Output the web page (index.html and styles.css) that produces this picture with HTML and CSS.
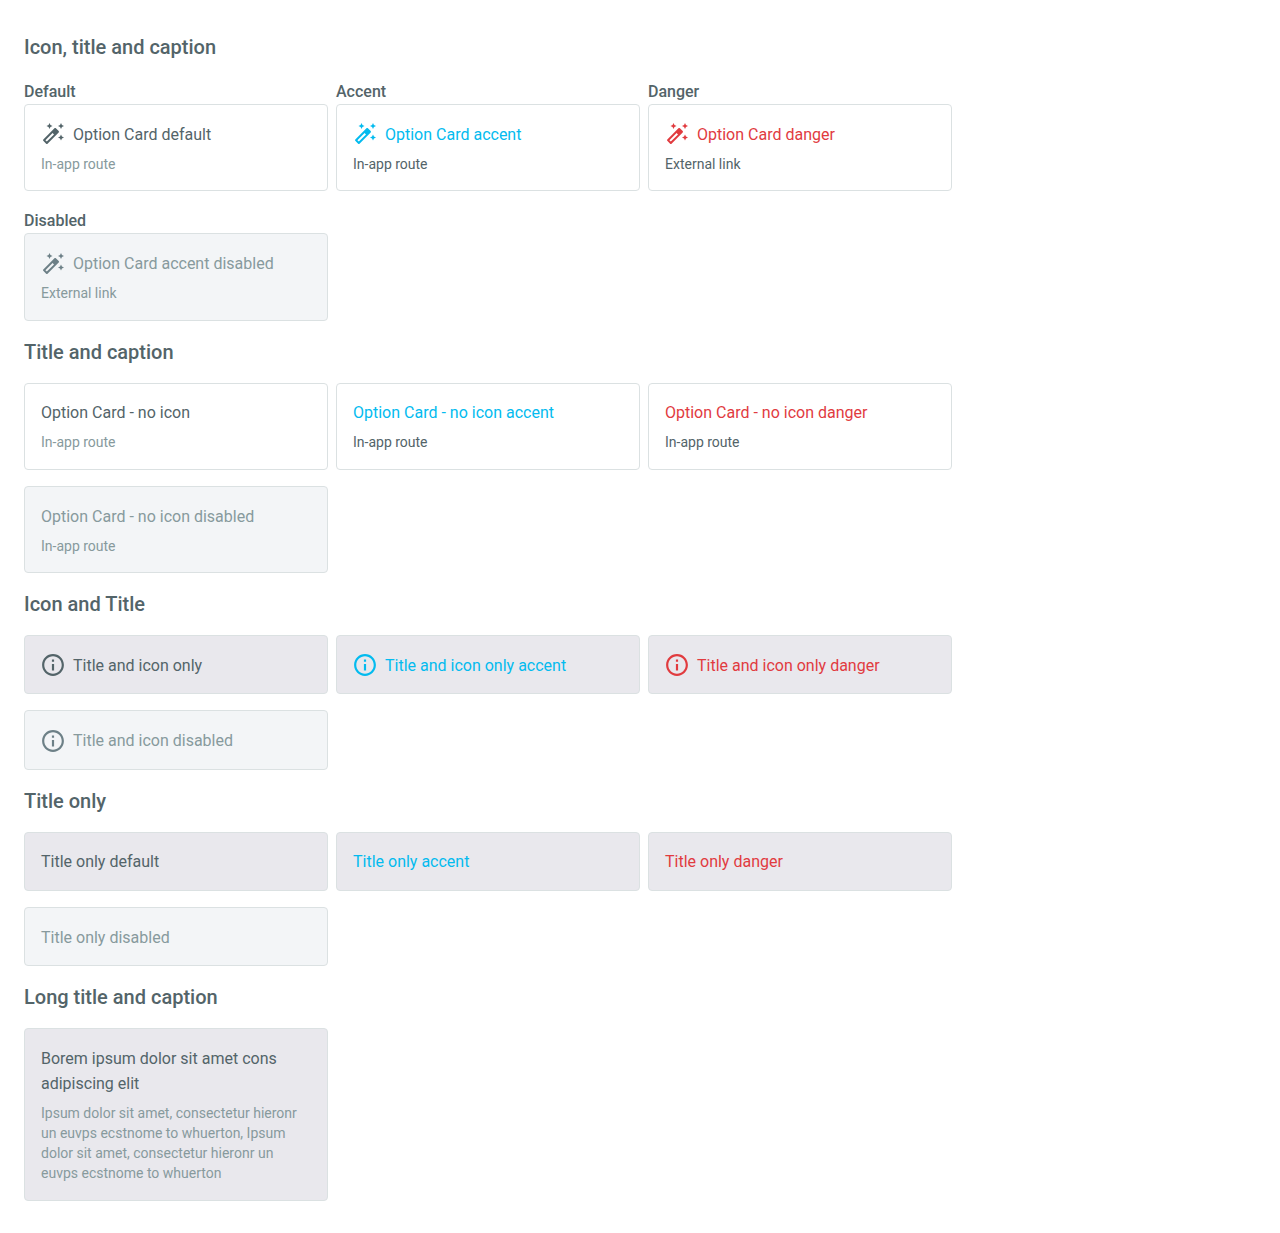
FILE: index.html
```
<!DOCTYPE html>
<html lang="en">
<head>
<meta charset="utf-8">
<title>Option Card</title>
<link rel="stylesheet" href="styles.css">
</head>
<body>
<svg class="sprite" aria-hidden="true">
  <symbol id="wand" viewBox="0 0 24 24"><path d="M20 7l.94-2.06L23 4l-2.06-.94L20 1l-.94 2.06L17 4l2.06.94zM8.5 7l.94-2.06L11.5 4l-2.06-.94L8.5 1l-.94 2.06L5.5 4l2.06.94zM20 12.5l-.94 2.06-2.06.94 2.06.94.94 2.06.94-2.06L23 15.5l-2.06-.94zM17.71 9.12l-2.83-2.83C14.68 6.1 14.43 6 14.17 6c-.26 0-.51.1-.71.29L2.29 17.46c-.39.39-.39 1.02 0 1.41l2.83 2.83c.2.2.45.3.71.3s.51-.1.71-.29l11.17-11.17c.39-.39.39-1.03 0-1.42zM5.83 19.59l-1.41-1.41L11.59 11 13 12.41l-7.17 7.18z"/></symbol>
  <symbol id="info" viewBox="1 1 22 22"><path d="M11 7h2v2h-2zm0 4h2v6h-2zm1-9C6.48 2 2 6.48 2 12s4.48 10 10 10 10-4.48 10-10S17.52 2 12 2zm0 18c-4.41 0-8-3.59-8-8s3.59-8 8-8 8 3.59 8 8-3.59 8-8 8z"/></symbol>
</svg>
<main class="page">
  <section>
    <h2 class="heading">Icon, title and caption</h2>
    <div class="grid">
      <div><h3 class="label">Default</h3>
        <a class="card"><span class="title"><svg class="icon"><use href="#wand"/></svg>Option Card default</span><span class="caption">In-app route</span></a></div>
      <div><h3 class="label">Accent</h3>
        <a class="card accent"><span class="title"><svg class="icon"><use href="#wand"/></svg>Option Card accent</span><span class="caption">In-app route</span></a></div>
      <div><h3 class="label">Danger</h3>
        <a class="card danger"><span class="title"><svg class="icon"><use href="#wand"/></svg>Option Card danger</span><span class="caption">External link</span></a></div>
      <div><h3 class="label">Disabled</h3>
        <a class="card disabled"><span class="title"><svg class="icon"><use href="#wand"/></svg>Option Card accent disabled</span><span class="caption">External link</span></a></div>
    </div>
  </section>
  <section>
    <h2 class="heading">Title and caption</h2>
    <div class="grid">
      <a class="card"><span class="title">Option Card - no icon</span><span class="caption">In-app route</span></a>
      <a class="card accent"><span class="title">Option Card - no icon accent</span><span class="caption">In-app route</span></a>
      <a class="card danger"><span class="title">Option Card - no icon danger</span><span class="caption">In-app route</span></a>
      <a class="card disabled"><span class="title">Option Card - no icon disabled</span><span class="caption">In-app route</span></a>
    </div>
  </section>
  <section>
    <h2 class="heading">Icon and Title</h2>
    <div class="grid">
      <a class="card filled"><span class="title"><svg class="icon"><use href="#info"/></svg>Title and icon only</span></a>
      <a class="card filled accent"><span class="title"><svg class="icon"><use href="#info"/></svg>Title and icon only accent</span></a>
      <a class="card filled danger"><span class="title"><svg class="icon"><use href="#info"/></svg>Title and icon only danger</span></a>
      <a class="card disabled"><span class="title"><svg class="icon"><use href="#info"/></svg>Title and icon disabled</span></a>
    </div>
  </section>
  <section>
    <h2 class="heading">Title only</h2>
    <div class="grid">
      <a class="card filled"><span class="title">Title only default</span></a>
      <a class="card filled accent"><span class="title">Title only accent</span></a>
      <a class="card filled danger"><span class="title">Title only danger</span></a>
      <a class="card disabled"><span class="title">Title only disabled</span></a>
    </div>
  </section>
  <section>
    <h2 class="heading">Long title and caption</h2>
    <div class="grid">
      <a class="card filled"><span class="title">Borem ipsum dolor sit amet cons adipiscing elit</span><span class="caption">Ipsum dolor sit amet, consectetur hieronr un euvps ecstnome to whuerton, Ipsum dolor sit amet, consectetur hieronr un euvps ecstnome to whuerton</span></a>
    </div>
  </section>
</main>
</body>
</html>
```
FILE: styles.css
```
* { box-sizing: border-box; }
body {
  margin: 0;
  background: #fff;
  color: #536469;
  font-family: Roboto, sans-serif;
}
.sprite { display: none; }
.page { padding: 16.1px 24px; }
.heading {
  margin: 0;
  padding: 16px 0;
  font-size: 20px;
  font-weight: 500;
  line-height: 30.125px;
}
.grid {
  display: grid;
  grid-template-columns: repeat(3, 304px);
  gap: 16px 8px;
}
.label {
  margin: 0;
  padding-top: 1px;
  font-size: 16px;
  font-weight: 500;
  line-height: 25px;
}
.card {
  display: flex;
  flex-direction: column;
  gap: 6.875px;
  padding: 16.625px 16px 15.375px;
  border: 1px solid #dbe1e2;
  border-radius: 4px;
  background: #fff;
}
.title {
  display: flex;
  align-items: center;
  gap: 8px;
  font-size: 16px;
  line-height: 25.2px;
}
.icon {
  flex: none;
  width: 24px;
  height: 24px;
  margin-bottom: 0.25px;
  fill: currentColor;
}
.caption {
  padding-bottom: 1.125px;
  color: #879a9d;
  font-size: 14px;
  line-height: 20px;
}
.filled { background: #e9e8ed; }
.accent .title { color: #03bbef; }
.danger .title { color: #e13b3f; }
.accent .caption,
.danger .caption { color: #536469; }
.disabled { background: #f3f5f7; }
.disabled .title { color: #879a9d; }
.disabled .icon { fill: #6d8087; }
```
